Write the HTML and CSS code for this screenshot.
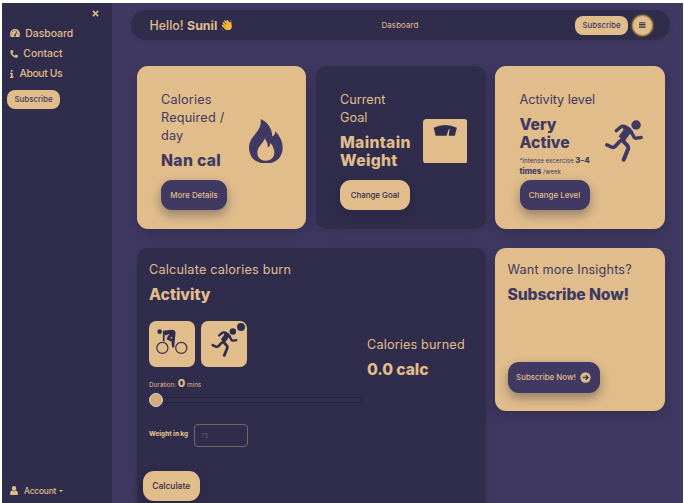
FILE: index.html
```html
<!DOCTYPE html>
<html lang="en">
<head>
<meta charset="utf-8">
<title>Dasboard</title>
<link rel="stylesheet" href="styles.css">
</head>
<body>
<svg class="defs" aria-hidden="true">
  <symbol id="runner" viewBox="351 181 112 125">
    <circle cx="443" cy="196" r="14" fill="currentColor"/>
    <g fill="none" stroke="currentColor" stroke-linecap="round" stroke-linejoin="round">
      <path d="M384 213l13-11q7-4 14-1l13 8" stroke-width="10"/>
      <path d="M419 211l-19 26" stroke-width="23" stroke-linecap="butt"/>
      <path d="M410 205l18 12" stroke-width="12"/>
      <path d="M428 216l9 16q3 4 8 3l13-2" stroke-width="10"/>
      <path d="M356 255l13 6q7 3 12-2l13-14" stroke-width="11"/>
      <path d="M401 240l15 16q5 5 3 11l-13 32" stroke-width="12"/>
    </g>
  </symbol>
</svg>
<div class="app">
  <aside class="sidebar">
    <div class="close"><svg viewBox="0 0 8 8"><path d="M1 1l6 6M7 1l-6 6" stroke="currentColor" stroke-width="1.7"/></svg></div>
    <nav class="menu">
      <a class="item"><svg class="gauge" viewBox="0 0 20 16"><path d="M2 16Q0 14 0 10a10 10 0 0 1 20 0q0 4-2 6z" fill="currentColor"/><g fill="#302c4c"><circle cx="3.5" cy="10" r="1.2"/><circle cx="5.6" cy="5.2" r="1.2"/><circle cx="10" cy="3.2" r="1.2"/><circle cx="16.5" cy="10" r="1.2"/><path d="M13 4l1.500 .8-2.900 7a2 2 0 1 1-1.800-.8z"/></g></svg><span class="t-dash">Dasboard</span></a>
      <a class="item"><svg class="phone" viewBox="0 0 16 16"><path d="M1 1l4-1 2 4.500-2.500 2q1.500 3.500 5 5l2-2.500L16 11l-1 4Q9 16.500 4.500 11.500 0 7 1 1z" fill="currentColor"/></svg><span class="t-contact">Contact</span></a>
      <a class="item"><svg class="info" viewBox="0 0 6 14"><path d="M1.500 0h3v3h-3zM0 5h4.500v7H6v2H0v-2h1.500V7H0z" fill="currentColor"/></svg><span class="t-about">About Us</span></a>
    </nav>
    <button class="pill">Subscribe</button>
    <div class="account"><svg class="user" viewBox="0 0 16 18"><path d="M8 0a4.500 4.800 0 0 1 0 9.600A4.500 4.800 0 0 1 8 0zM4 9q4 3 8 0 4 1 4 6v1q0 2-2 2H2q-2 0-2-2v-1q0-5 4-6z" fill="currentColor"/></svg><span>Account</span><i class="caret"></i></div>
  </aside>
  <main class="main">
    <header class="topbar">
      <div class="hello"><span class="t-hello">Hello!</span><b>Sunil</b>
        <svg class="wave" viewBox="0 0 24 24"><g fill="none" stroke="#f5bd3a" stroke-linecap="round" stroke-width="3.600"><path d="M5 8l8 9M8 4.500l8 9M12.500 4l6 8M3.500 13l7 7M19 14V7.500"/></g><path d="M8 12l8-5 5 5q2 8-4 10-5 1-8-3z" fill="#f5bd3a"/><path d="M9 8l6 6M6 12l6 6" stroke="#b77c23" stroke-width=".9"/><path d="M1 19q1 3 4 4M17 2q3 0 4 3" fill="none" stroke="#9b8c82" stroke-width="1.200"/></svg>
      </div>
      <span class="crumb">Dasboard</span>
      <div class="actions"><button class="pill">Subscribe</button><button class="burger"><svg viewBox="0 0 8 8"><path d="M0 1h8M0 3h8M0 5h8M0 7h8" stroke="currentColor" stroke-width="1.200"/></svg></button></div>
    </header>
    <section class="grid">
      <article class="card gold stat">
        <div class="copy"><p class="label t-required">Calories<br>Required /<br>day</p><h2 class="t-nan">Nan cal</h2><button class="btn w66">More Details</button></div>
        <svg class="fire" viewBox="357 176 102 134"><path fill-rule="evenodd" fill="currentColor" d="M392 176C415 186 426 206 427 229Q435 225 437 214C450 228 459 246 458 264C457 294 436 310 407 310C377 310 357 292 357 262C357 224 397 218 392 176ZM403 235C402 249 382 257 382 278C382 294 393 302 407 302C422 302 433 293 433 278Q433 260 421 248Q421 258 413 262Q415 247 403 235Z"/></svg>
      </article>
      <article class="card dark stat">
        <div class="copy"><p class="label">Current<br>Goal</p><h2 class="t-goal">Maintain<br>Weight</h2><button class="btn light w70">Change Goal</button></div>
        <svg class="scale" viewBox="0 0 44 44"><rect width="44" height="44" rx="3.500" fill="currentColor"/><path d="M10.500 8.700Q22 3.300 33.500 8.700L31.500 16.500H25.500L26.300 10h-.8L23.300 16.500H12.500Z" fill="#302c4c"/></svg>
      </article>
      <article class="card gold stat">
        <div class="copy"><p class="label t-level">Activity level</p><h2 class="t-very">Very<br>Active</h2><p class="note">*intense excercise <b>3-4<br>times</b> /week</p><button class="btn w70">Change Level</button></div>
        <svg class="run"><use href="#runner"/></svg>
      </article>
      <article class="card dark calc">
        <div class="form">
          <p class="label t-calc">Calculate calories burn</p><h2>Activity</h2>
          <div class="picks">
            <div class="pick"><svg class="bike" viewBox="75 268 95 77"><g fill="none" stroke="currentColor" stroke-width="3.500"><circle cx="94" cy="324" r="16.500"/><circle cx="150" cy="324" r="16.500"/><path d="M98 277V304" stroke-width="5"/></g><circle cx="86" cy="276" r="7" fill="currentColor"/><path d="M95 273L123 270Q132 270 133 279L129 323H123L121 305 107 299 109 291Q113 286 116 283L101 287Z" fill="currentColor"/><circle cx="121" cy="294" r="2.500" fill="#e0bd8b"/></svg></div>
            <div class="pick"><svg class="mini-run"><use href="#runner"/></svg><i class="dot"></i></div>
          </div>
          <p class="duration">Duration: <b>0</b> mins</p>
          <div class="slider"><i class="thumb"></i><i class="track"></i></div>
          <div class="weight"><b>Weight in kg</b><span class="input">75</span></div>
          <button class="btn light calculate">Calculate</button>
        </div>
        <div class="result"><p class="label t-burned">Calories burned</p><h2 class="t-result">0.0 calc</h2></div>
      </article>
      <article class="card gold promo">
        <p class="label t-want">Want more Insights?</p><h2 class="t-sub">Subscribe Now!</h2>
        <button class="btn subscribe">Subscribe Now!<svg viewBox="0 0 12 12"><circle cx="6" cy="6" r="5.600" fill="currentColor"/><path d="M3 6h5.500M6.300 3.500L8.800 6 6.300 8.500" fill="none" stroke="#403962" stroke-width="1.500"/></svg></button>
      </article>
    </section>
  </main>
</div>
</body>
</html>
```

FILE: styles.css
```css
* { box-sizing: border-box; }
body { margin: 0; height: 503px; overflow: hidden; background: #fff; font-family: Inter, "Open Sans", sans-serif; }
p, h2 { margin: 0; }
svg { display: block; flex: none; }
button { border: 0; padding: 0; font: inherit; }
.defs { position: absolute; width: 0; height: 0; }
.app { display: flex; height: 503px; padding: 3px 1px 0 2px; color: #e0bd8b; }

.sidebar { width: 110px; flex: none; display: flex; flex-direction: column; background: #302c4c; }
.close { padding: 6.500px 13.500px 0 0; }
.close svg { width: 7px; height: 7px; margin-left: auto; }
.menu { margin-top: 6.700px; padding-left: 8px; }
.item { display: flex; align-items: center; height: 20.300px; font-size: 10.400px; font-weight: 500; }
.gauge { width: 10px; height: 8px; margin-right: 5.300px; }
.phone { width: 8px; height: 8px; margin-right: 5.300px; }
.info { width: 3.500px; height: 8px; margin-right: 6px; }
.t-about { letter-spacing: -.4px; }
.pill { width: 53px; height: 19px; border-radius: 8px; background: #e0bd8b; color: #403962; font-size: 7.900px; font-weight: 500; }
.sidebar .pill { margin: 6px 0 0 5px; height: 18.500px; }
.account { display: flex; align-items: center; margin: auto 0 7px 8px; height: 11px; font-size: 8.300px; font-weight: 500; letter-spacing: -.15px; }
.user { width: 8px; height: 9px; margin-right: 6px; }
.caret { margin-left: 3px; border: 2px solid transparent; border-top-color: currentColor; border-bottom: 0; }

.main { flex: 1; min-width: 0; padding: 7px 13px 0 19px; background: #403962; overflow: hidden; }
.topbar { display: flex; align-items: center; width: 539px; height: 30px; padding: 0 17px 0 18.500px; border-radius: 15px; background: #302c4c; box-shadow: 0 1px 4px #302c4c55; }
.hello { display: flex; align-items: center; width: 232px; font-size: 12.400px; font-weight: 500; }
.hello b { margin-left: 3.500px; font-weight: 700; }
.wave { width: 12px; height: 12px; margin-left: 3.500px; }
.crumb { font-size: 8px; letter-spacing: .05px; }
.actions { display: flex; align-items: center; gap: 4px; margin-left: auto; }
.burger { display: grid; place-items: center; width: 21px; height: 21px; border-radius: 50%; background: #e0bd8b; border: 1px solid #a5813c; box-shadow: 0 0 2px #d5a940; color: #302c4c; }
.burger svg { width: 6.500px; height: 6.500px; }

.grid { display: grid; grid-template-columns: 169.500px 170px 169.500px; grid-template-rows: 163.500px 280px; column-gap: 9.500px; row-gap: 18.500px; margin: 25.500px 0 0 5.500px; }
.card { border-radius: 11px; box-shadow: 0 4px 13px #241f3c78; }
.gold { background: #e0bd8b; color: #403962; }
.dark { background: #302c4c; box-shadow: 0 2px 12px #29254466; }
.stat { display: flex; padding: 24.500px 0 0 24.500px; }
.copy { display: flex; flex-direction: column; width: 86px; height: 120px; white-space: nowrap; }
.label { font-size: 12.700px; line-height: 18px; padding-top: .5px; margin-bottom: -.5px; white-space: nowrap; }
.t-required { letter-spacing: .18px; }
.t-level { letter-spacing: -.04px; }
.t-calc { letter-spacing: .18px; }
.t-burned, .t-want { letter-spacing: .14px; }
h2 { font-size: 15.700px; line-height: 18px; font-weight: 800; margin-top: 7px; padding-top: .5px; margin-bottom: -.5px; white-space: nowrap; }
.t-nan, .t-goal { letter-spacing: .32px; }
.t-result { letter-spacing: -.1px; }
.t-sub { letter-spacing: -.12px; }
.note { margin-top: 4px; font-size: 6.200px; line-height: 11px; }
.note b { font-size: 7.900px; font-weight: 800; }
.btn { height: 30.500px; border-radius: 11px; background: #403962; color: #e0bd8b; font-size: 7.900px; font-weight: 500; white-space: nowrap; box-shadow: 0 5px 11px #211e3966; }
.copy .btn { margin-top: auto; }
.w66 { width: 66px; }
.w70 { width: 70px; }
.light { background: #e0bd8b; color: #302c4c; }
.fire { width: 34px; height: 44.500px; margin: 28.500px 0 0 2px; }
.scale { width: 44.500px; height: 44.500px; margin: 28.500px 0 0 -3.500px; color: #e0bd8b; }
.run { width: 38px; height: 42px; margin: 30px 0 0 -.5px; }

.calc { display: flex; grid-column: span 2; padding: 12.500px 0 0 12.500px; }
.form { width: 218px; }
.picks { display: flex; gap: 6px; margin-top: 17.500px; }
.pick { position: relative; display: grid; place-items: center; width: 46px; height: 46px; border-radius: 7px; background: #e0bd8b; color: #302c4c; }
.bike { width: 32px; height: 26px; margin-bottom: 3px; }
.mini-run { width: 27px; height: 29px; margin-bottom: 3px; }
.dot { position: absolute; top: 2px; right: 2px; width: 8px; height: 8px; border-radius: 50%; background: #302c4c; }
.duration { margin-top: 9px; height: 15px; line-height: 15px; font-size: 6.300px; }
.duration b { font-size: 10.800px; font-weight: 800; }
.slider { display: flex; align-items: center; width: 212.500px; height: 14px; margin-top: 2.500px; }
.track { flex: 1; height: 6px; margin-left: -7px; border: 1px solid #272340; border-radius: 3px; }
.thumb { position: relative; z-index: 1; width: 14px; height: 14px; border-radius: 50%; background: #cfad7d; border: 1px solid #d8d0d0; }
.weight { display: flex; align-items: center; height: 23px; margin-top: 16.500px; font-size: 6.400px; }
.weight b { width: 45px; margin-top: -3px; font-weight: 800; white-space: nowrap; }
.input { width: 54px; height: 23px; padding-left: 6px; border: 1px solid #776660; border-radius: 4px; color: #655e68; line-height: 22px; }
.calculate { display: block; width: 56.500px; margin: 24px 0 0 -6px; font-size: 8.500px; }
.result { margin-top: 75px; }
.promo { height: 163.500px; padding: 12.500px; }
.subscribe { display: flex; align-items: center; justify-content: center; gap: 4px; width: 92px; margin-top: 59px; }
.subscribe svg { width: 11px; height: 11px; }
```
